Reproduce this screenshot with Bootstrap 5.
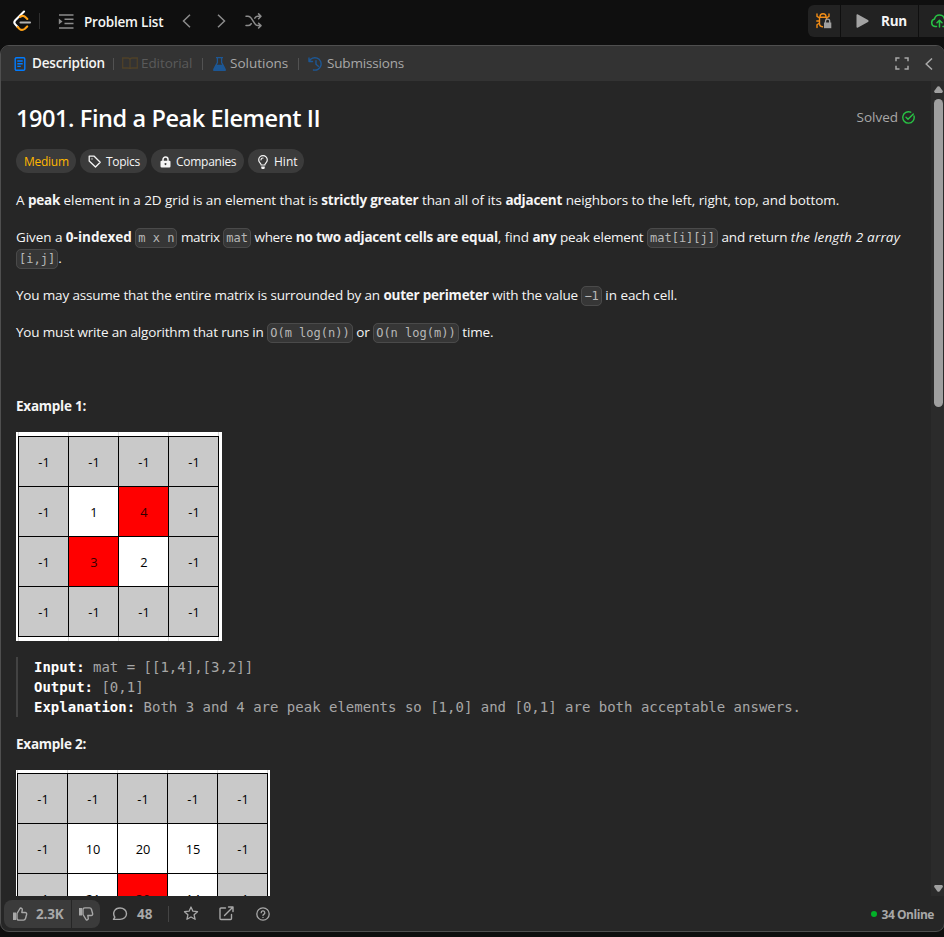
<!DOCTYPE html>
<html lang="en" data-bs-theme="dark">
<head>
<meta charset="utf-8">
<meta name="viewport" content="width=device-width, initial-scale=1">
<title>1901. Find a Peak Element II</title>
<link href="https://cdn.jsdelivr.net/npm/bootstrap@5.3.0/dist/css/bootstrap.min.css" rel="stylesheet">
<style>
html,body{height:100%}
body{background:#0f0f0f;color:#f5f5f5;font-family:"Open Sans","Noto Sans",sans-serif;font-size:13.5px;line-height:21px;overflow:hidden}
svg{flex:none;display:block}
.topbar{height:45px;padding:0 0 3px 13px;color:#8c8c8c}
.topbar .plist{font-weight:600;color:#f5f5f5;letter-spacing:-.2px;margin-left:10px;width:98px;padding-top:2px}
.vline{width:1px;background:#2e2e2e;flex:none}
.runbar{height:32px;gap:1px;margin-right:-24px}
.runbar>div{background:#222;height:32px}
.runbar .dbg{width:32px;border-radius:6px 0 0 6px}
.runbar .runb{width:77px;padding-left:15px}
.runbar .runb span{font-weight:700;color:#f5f5f5;letter-spacing:-.25px;margin-left:12px}
.runbar .cloud{width:49px;padding-left:11px}
.panel{height:887px;background:#262626;border:1px solid #4f4f4f;border-radius:9px;overflow:hidden;margin-right:-1px}
.tabs{height:35px;background:#333;color:#a8a8a8;padding:0 11px 0 13px;flex:none}
.tabs .vline{height:12px;background:#525252}
.tabs .dim{color:#5a5a5a}
.tabs .cur{font-weight:600;color:#f5f5f5;letter-spacing:-.17px}
.content{padding:22px 15px 0;overflow:hidden;min-width:0}
.ttl{font-size:23.5px;line-height:32px;font-weight:600;letter-spacing:-.41px;margin:-1px 0 0}
.solved{color:#a8a8a8;margin-right:1px;gap:4px;padding-top:4px}
.pills{gap:4px;margin:15px 0 17px}
.pill{height:24px;border-radius:12px;background:#3b3b3b;font-size:12px;letter-spacing:-.27px;padding:1px 0 0 8px;line-height:23px;white-space:nowrap}
.pill.med{color:#ffb700;width:60px}
.txt p{margin:0 0 16px;letter-spacing:-.09px;word-spacing:.1px;white-space:nowrap}
.txt p b{font-weight:700;letter-spacing:-.24px}
.txt p i{letter-spacing:.15px}
.txt .k1{letter-spacing:-.19px}
.txt .k2{letter-spacing:-.33px}
.txt .k0{letter-spacing:0}
.txt code{font:12px/1 "DejaVu Sans Mono",monospace;color:#b8b8b8;background:#363636;border:1px solid #4a4a4a;border-radius:5px;padding:2px;letter-spacing:0;word-spacing:0}
.txt pre{font:14px/20px "DejaVu Sans Mono",monospace;color:#a6a6a6;border-left:2px solid #434343;padding-left:16px;margin:16px 0 17px;overflow:hidden}
.txt pre b{color:#fff;font-weight:700}
.mat{background:#fff repeating-linear-gradient(90deg,#d6d6d6 0 1px,transparent 1px 50px);color:#000;font-size:12.8px;margin-top:-17px;position:relative}
.txt p.ex{margin-bottom:32px}
.mat .cells{display:grid;background:#000;gap:1px;padding:1px}
.mat .cells>div{background:#c9c9c9;display:flex;align-items:center;justify-content:center;height:49px;padding:1px 0 0 1px}
.mat .cells>.w{background:#fff}
.mat .cells>.r{background:red;color:#300}
.m1{width:206px;height:209px;padding:4px 3px 4px 2px;background-position:2px 0}
.m1 .cells{grid-template-columns:repeat(4,49px)}
.m2{width:254px;height:154px;padding:3px 2px 0 1px;background-position:1px 0}
.m2 .cells{grid-template-columns:repeat(5,49px)}
.sbar{width:13px;background:#2b2b2b;flex:none;padding:5px 0 0 1px}
.sbar .thumb{width:9px;height:308px;border-radius:5px;background:#9f9f9f;margin-top:6px}
.foot{height:35px;flex:none;color:#a8a8a8;padding:0 10px 0 3px;font-weight:700}
.foot span{padding-top:1px}
.votes{gap:1px}
.votes>div{background:#3b3b3b;height:28px}
.votes .up{width:67px;border-radius:8px 0 0 8px;padding-left:8px;gap:8px;letter-spacing:-.2px}
.votes .dn{width:28px;border-radius:0 8px 8px 0}
.dot{width:6px;height:6px;border-radius:50%;background:#02b128}
.online{font-size:12px;letter-spacing:-.45px;gap:4px}
</style>
<script src="https://cdn.jsdelivr.net/npm/bootstrap@5.3.0/dist/js/bootstrap.bundle.min.js"></script>
</head>
<body>
<header class="topbar d-flex align-items-center">
  <svg width="19" height="22" viewBox="0 0 19 22" fill="none" stroke-width="2.1" stroke-linecap="round" stroke-linejoin="round"><path d="M11 1.5 2.3 10.2c-1.3 1.4-1.3 2.8 0 4.2l2.4 2.6" stroke="#fff"/><path d="M7 7c2.2-1.7 4-1.5 5.600.2l1.700 1.700M4.700 17l1.600 1.700c1.700 1.500 3.800 1.500 5.600 0l2.300-2.300" stroke="#ffa116"/><path d="M7.500 12.500h9.500" stroke="#b3b3b3"/></svg>
  <div class="vline" style="height:16px;margin-left:7px"></div>
  <svg style="margin-left:18px" width="16" height="15" viewBox="0 0 16 15" fill="none" stroke="#8c8c8c" stroke-width="1.500"><path d="M1 1h14.500M6.500 5.300h9M6.500 9.600h9M1 14h14.500"/><path d="M.8 4.500v6l3.700-3z" fill="#8c8c8c" stroke="none"/></svg>
  <span class="plist">Problem List</span>
  <svg width="9" height="14" viewBox="0 0 9 14" fill="none" stroke="#8c8c8c" stroke-width="1.500"><path d="M8 .7 1.500 7 8 13.300"/></svg>
  <svg style="margin-left:26px" width="9" height="14" viewBox="0 0 9 14" fill="none" stroke="#8c8c8c" stroke-width="1.500"><path d="M1 .7 7.500 7 1 13.300"/></svg>
  <svg style="margin-left:19px" width="18" height="16" viewBox="0 0 18 16" fill="none" stroke="#8c8c8c" stroke-width="1.500" stroke-linecap="round" stroke-linejoin="round"><path d="M1 3.300h2c1.500 0 2.300.6 3.200 1.800l3.600 5.600c.8 1.200 1.600 1.900 3 1.900H16M1 12.600h2c1.500 0 2.300-.6 3.200-1.900M9.800 5.100c.8-1.200 1.600-1.800 3-1.800H16M13.600.9 16 3.300l-2.400 2.400M13.600 10.200l2.400 2.400-2.400 2.400"/></svg>
  <div class="runbar d-flex ms-auto">
    <div class="dbg d-flex align-items-center justify-content-center"><svg width="16" height="16" viewBox="0 0 16 16" fill="none" stroke="#f08c16" stroke-width="1.400" stroke-linecap="round"><path d="M4 3.800a3 3 0 0 1 6 0M3.800 4.200h6.400M3.500 4.500v5.500a3.500 3.500 0 0 0 3 3.800M10.500 4.500v2M1 1v2.400l2.500 1.500M13 1v2.400l-2.500 1.500M.8 8h2.500M1 14.500v-2.700L3.500 10"/><path d="M8 9.500h7.300v5.700H8z" fill="#a0a0a0" stroke="none"/><path d="M9.500 10V8.300a2.100 2.100 0 0 1 4.200 0V10" stroke="#a0a0a0" stroke-width="1.300"/></svg></div>
    <div class="runb d-flex align-items-center"><svg width="13" height="14" viewBox="0 0 13 14" fill="#a3a3a3"><path d="M.5 1C.5.2 1.200 0 2 .4l10 5.700c.8.5.8 1.300 0 1.800L2 13.600c-.8.400-1.500.2-1.500-.6z"/></svg><span>Run</span></div>
    <div class="cloud d-flex align-items-center"><svg width="19" height="16" viewBox="0 0 19 16" fill="none" stroke="#28c244" stroke-width="1.500" stroke-linecap="round" stroke-linejoin="round"><path d="M6.500 13.600H5A3.900 3.900 0 0 1 4.500 6a5.100 5.100 0 0 1 10 0 3.900 3.900 0 0 1-.5 7.600h-1M9.500 14V7.500M7 9.700l2.500-2.400L12 9.700"/></svg></div>
  </div>
</header>

<main class="panel d-flex flex-column">
  <nav class="tabs d-flex align-items-center">
    <svg width="12" height="14" viewBox="0 0 12 14" fill="none" stroke="#007bff" stroke-width="1.400"><rect x="1.200" y=".7" width="9.600" height="12.600" rx="1.300"/><path d="M3.300 4h5.400M3.300 6.700h5.400M3.300 9.400h3.500"/></svg>
    <span class="cur" style="margin-left:6px;width:81px">Description</span>
    <div class="vline"></div>
    <svg style="margin-left:8px" width="16" height="13" viewBox="0 0 16 13" fill="none" stroke="#4f4128" stroke-width="1.300"><path d="M.7 1h5C7 1 8 1.800 8 3v9c0-.5-.8-1-2-1H.7zM15.300 1h-5C9 1 8 1.800 8 3v9c0-.5.8-1 2-1h5.300z"/></svg>
    <span class="dim" style="margin-left:3px;width:61px;letter-spacing:-.08px">Editorial</span>
    <div class="vline"></div>
    <svg style="margin-left:10px" width="13" height="14" viewBox="0 0 13 14" fill="none" stroke="#1d5794" stroke-width="1.300"><path d="M3 .7h7M4.400.7v4.800L1 12c-.3.800 0 1.300.7 1.300h9.600c.7 0 1-.5.7-1.300L8.600 5.500V.7"/><path d="M3 8.500h7l2 4.500H1z" fill="#1d5794"/></svg>
    <span style="margin-left:4px;width:68px">Solutions</span>
    <div class="vline"></div>
    <svg style="margin-left:9px" width="15" height="14" viewBox="0 0 15 14" fill="none" stroke="#1d5794" stroke-width="1.400" stroke-linecap="round" stroke-linejoin="round"><path d="M1 1v3.500h3.500M1.300 4.300A6.200 6.200 0 1 1 5.500 13M8 3.700v3.600l2.300 2"/></svg>
    <span style="margin-left:4px;letter-spacing:-.17px">Submissions</span>
    <svg class="ms-auto" width="14" height="13" viewBox="0 0 14 13" fill="none" stroke="#a8a8a8" stroke-width="1.500"><path d="M1 4.300V1h3.500M9.500 1H13v3.300M13 8.700V12H9.500M4.500 12H1V8.700"/></svg>
    <svg style="margin-left:16px" width="8" height="12" viewBox="0 0 8 12" fill="none" stroke="#a8a8a8" stroke-width="1.500"><path d="M7 .5 1.200 6 7 11.500"/></svg>
  </nav>
  <div class="d-flex flex-grow-1" style="min-height:0">
    <div class="content flex-grow-1">
      <div class="d-flex justify-content-between">
        <h1 class="ttl">1901. Find a Peak Element II</h1>
        <div class="solved d-flex align-items-start"><span>Solved</span><svg style="margin-top:4px" width="13" height="13" viewBox="0 0 13 13" fill="none" stroke="#28c244" stroke-width="1.400" stroke-linecap="round" stroke-linejoin="round"><path d="M8.700 1.200A5.700 5.700 0 1 0 12 5"/><path d="M4 6.300l2 2L11.300 3"/></svg></div>
      </div>
      <div class="pills d-flex">
        <div class="pill med">Medium</div>
        <div class="pill d-flex align-items-center" style="width:67px"><svg style="margin-right:4px" width="14" height="13" viewBox="0 0 14 13" fill="none" stroke="#f5f5f5" stroke-width="1.300" stroke-linejoin="round"><path d="M1.200 1.200h5l6 6-4.700 4.800L1.200 6z"/><circle cx="4" cy="3.900" r=".7" fill="#f5f5f5" stroke="none"/></svg>Topics</div>
        <div class="pill d-flex align-items-center" style="width:93px;padding-left:9px"><svg style="margin-right:5px" width="11" height="12" viewBox="0 0 11 12"><path d="M3 5V3.500a2.500 2.500 0 0 1 5 0V5" fill="none" stroke="#f5f5f5" stroke-width="1.500"/><path fill="#f5f5f5" fill-rule="evenodd" d="M1.500 4.700h8q1 0 1 1v4.600q0 1.200-1.200 1.200H1.700Q.5 11.500.5 10.300V5.700q0-1 1-1zM5.500 7a1 1 0 1 0 .01 0z"/></svg>Companies</div>
        <div class="pill d-flex align-items-center" style="width:56px;padding-left:10px;letter-spacing:0"><svg style="margin-right:6px" width="10" height="14" viewBox="0 0 10 14" fill="none" stroke="#f5f5f5" stroke-width="1.200" stroke-linecap="round"><path d="M3.200 10C3.200 8.500.7 7.500.7 4.900a4.300 4.300 0 0 1 8.600 0C9.300 7.500 6.800 8.500 6.800 10zM3.600 12.200h2.800M4 13.300h2M3 4.800A2 2 0 0 1 5 3"/></svg>Hint</div>
      </div>
      <div class="txt">
        <p>A <b>peak</b> element in a 2D grid is an element that is <b>strictly greater</b> than all of its <b>adjacent</b> neighbors to the left, right, top, and bottom.</p>
        <p>Given a <b class="k0">0-indexed</b> <code>m x n</code> <span class="k2">matrix</span> <code>mat</code> <span class="k2">where</span> <b>no two adjacent cells are equal</b>, find <b>any</b> <span class="k1">peak element</span> <code>mat[i][j]</code> <span class="k1">and return</span> <i>the length 2 array</i><br><code>[i,j]</code>.</p>
        <p><span class="k1">You may assume that the entire matrix is surrounded by an</span> <b>outer perimeter</b> <span class="k1">with the value</span> <code>−1</code> in each cell.</p>
        <p><span class="k1">You must write an algorithm that runs in</span> <code>O(m log(n))</code> or <code>O(n log(m))</code> time.</p>
        <p>&nbsp;</p>
        <p class="ex"><b>Example 1:</b></p>
        <div class="mat m1"><div class="cells"><div>-1</div><div>-1</div><div>-1</div><div>-1</div><div>-1</div><div class="w">1</div><div class="r">4</div><div>-1</div><div>-1</div><div class="r">3</div><div class="w">2</div><div>-1</div><div>-1</div><div>-1</div><div>-1</div><div>-1</div></div></div>
        <pre><b>Input:</b> mat = [[1,4],[3,2]]
<b>Output:</b> [0,1]
<b>Explanation:</b> Both 3 and 4 are peak elements so [1,0] and [0,1] are both acceptable answers.</pre>
        <p class="ex"><b>Example 2:</b></p>
        <div class="mat m2"><div class="cells"><div>-1</div><div>-1</div><div>-1</div><div>-1</div><div>-1</div><div>-1</div><div class="w">10</div><div class="w">20</div><div class="w">15</div><div>-1</div><div>-1</div><div class="w">21</div><div class="r">30</div><div class="w">14</div><div>-1</div></div></div>
      </div>
    </div>
    <div class="sbar d-flex flex-column align-items-center">
      <svg width="9" height="7" viewBox="0 0 9 7" fill="#9f9f9f"><path d="M3.500.6q1-.9 2 0L8.800 5q.4 1.500-1 2H1.200Q-.2 6.500.2 5z"/></svg>
      <div class="thumb"></div>
      <svg class="mt-auto mb-1" width="9" height="7" viewBox="0 0 9 7" fill="#9f9f9f"><path d="M3.500 6.400q1 .9 2 0L8.800 2q.4-1.500-1-2H1.200Q-.2.500.2 2z"/></svg>
    </div>
  </div>
  <footer class="foot d-flex align-items-center">
    <div class="votes d-flex">
      <div class="up d-flex align-items-center"><svg width="16" height="14" viewBox="0 0 16 14" fill="none" stroke="#a8a8a8" stroke-width="1.400" stroke-linejoin="round"><path d="M1 5.500h3v7.500H1z" fill="#a8a8a8" stroke="none"/><path d="M5 6.500 8.300 1c1.700 0 2.200 1 1.900 2.300L9.800 5.500h3.300c1.300 0 1.800.8 1.500 2l-1.100 4c-.3 1.100-.9 1.600-2 1.600H7c-1 0-2-.5-2-1.600z"/></svg><span>2.3K</span></div>
      <div class="dn d-flex align-items-center justify-content-center"><svg width="16" height="14" viewBox="0 0 16 14" fill="none" stroke="#a8a8a8" stroke-width="1.400" stroke-linejoin="round"><path d="M1 1h3v7.500H1z" fill="#a8a8a8" stroke="none"/><path d="M5 7.500 8.300 13c1.700 0 2.200-1 1.900-2.300L9.800 8.500h3.300c1.300 0 1.800-.8 1.500-2l-1.100-4C13.200 1.400 12.600.9 11.500.9H7c-1 0-2 .5-2 1.600z"/></svg></div>
    </div>
    <svg style="margin-left:12px" width="16" height="14" viewBox="0 0 16 14" fill="none" stroke="#a8a8a8" stroke-width="1.400" stroke-linejoin="round"><path d="M8 1c3.700 0 6.500 2.500 6.500 5.700s-2.800 5.700-6.500 5.700H1.500l1.300-2.200C.2 6 2.500 1 8 1z"/></svg>
    <span style="margin-left:9px;width:31px">48</span>
    <div class="vline" style="height:16px;background:#444"></div>
    <svg style="margin-left:14px" width="16" height="15" viewBox="0 0 15 15" fill="none" stroke="#a8a8a8" stroke-width="1.300" stroke-linejoin="round"><path d="m7.500 1 1.900 4.200 4.600.5-3.400 3.100 1 4.500-4.100-2.300-4.100 2.300 1-4.500L1 5.700l4.600-.5z"/></svg>
    <svg style="margin-left:20px" width="15" height="15" viewBox="0 0 15 15" fill="none" stroke="#a8a8a8" stroke-width="1.400" stroke-linecap="round" stroke-linejoin="round"><path d="M6.500 2H2q-1 0-1 1v9.500q0 1 1 1h9.500q1 0 1-1V8.500M9.500 1H14v4.500M13.500 1.500 5.500 9.500"/></svg>
    <svg style="margin-left:22px" width="14" height="14" viewBox="0 0 14 14" fill="none" stroke="#a8a8a8" stroke-width="1.300" stroke-linecap="round"><circle cx="7" cy="7" r="6.200"/><path d="M5.200 5.700a1.800 1.800 0 1 1 2.600 1.600c-.5.300-.8.500-.8 1.100M7 10.300v.1"/></svg>
    <div class="online d-flex align-items-center ms-auto"><div class="dot"></div><span>34 Online</span></div>
  </footer>
</main>
</body>
</html>
